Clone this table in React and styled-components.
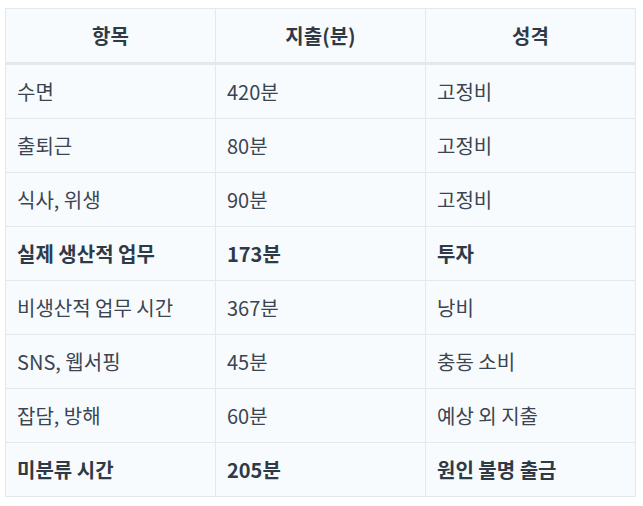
import React from "react";
import styled, { createGlobalStyle } from "styled-components";

const Global = createGlobalStyle`
  html, body { margin: 0; padding: 0; background: #ffffff; }
  body { padding: 8px 5px; font-family: "Noto Sans CJK KR", "Noto Sans", sans-serif; }
`;

const Table = styled.table`
  width: 631px;
  border-collapse: collapse;
  background: #f8fbfd;
  color: #3b4552;
  font-size: 20px;
  table-layout: fixed;
`;

const Th = styled.th`
  border: 1px solid #e2e8ee;
  border-bottom: 3px solid #e2e8ee;
  padding: 0 11px;
  height: 53px;
  font-weight: 700;
  text-align: center;
  color: #2f3a47;
`;

const Td = styled.td`
  border: 1px solid #e2e8ee;
  padding: 0 11px;
  height: 53px;
  text-align: left;
  font-weight: ${(p) => (p.$bold ? 700 : 400)};
  color: ${(p) => (p.$bold ? "#2f3a47" : "#3b4552")};
`;

const rows = [
  ["수면", "420분", "고정비"],
  ["출퇴근", "80분", "고정비"],
  ["식사, 위생", "90분", "고정비"],
  ["실제 생산적 업무", "173분", "투자", true],
  ["비생산적 업무 시간", "367분", "낭비"],
  ["SNS, 웹서핑", "45분", "충동 소비"],
  ["잡담, 방해", "60분", "예상 외 지출"],
  ["미분류 시간", "205분", "원인 불명 출금", true],
];

export default function App() {
  return (
    <>
      <Global />
      <Table>
        <thead>
          <tr>
            <Th>항목</Th>
            <Th>지출(분)</Th>
            <Th>성격</Th>
          </tr>
        </thead>
        <tbody>
          {rows.map(([a, b, c, bold]) => (
            <tr key={a}>
              <Td $bold={bold}>{a}</Td>
              <Td $bold={bold}>{b}</Td>
              <Td $bold={bold}>{c}</Td>
            </tr>
          ))}
        </tbody>
      </Table>
    </>
  );
}
